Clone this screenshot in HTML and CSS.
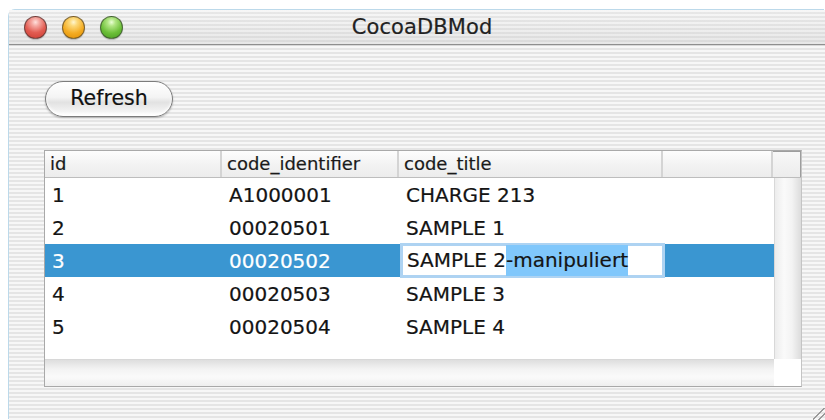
FILE: index.html
```html
<!DOCTYPE html>
<html>
<head>
<meta charset="utf-8">
<title>CocoaDBMod</title>
<link rel="stylesheet" href="styles.css">
</head>
<body>
<div class="window">
  <div class="titlebar">
    <div class="lights">
      <span class="light red"></span>
      <span class="light yellow"></span>
      <span class="light green"></span>
    </div>
    <div class="title">CocoaDBMod</div>
    <div></div>
  </div>
  <div class="content">
    <button class="btn">Refresh</button>
    <div class="table">
      <div class="thead">
        <div class="th">id</div>
        <div class="th">code_identifier</div>
        <div class="th">code_title</div>
        <div class="th"></div>
        <div class="th corner"></div>
      </div>
      <div class="tbody">
        <div class="rows">
          <div class="row"><div class="td">1</div><div class="td">A1000001</div><div class="td">CHARGE 213</div></div>
          <div class="row"><div class="td">2</div><div class="td">00020501</div><div class="td">SAMPLE 1</div></div>
          <div class="row selected"><div class="td">3</div><div class="td">00020502</div><div class="td"><span class="editor">SAMPLE 2<span class="sel">-manipuliert</span></span></div></div>
          <div class="row"><div class="td">4</div><div class="td">00020503</div><div class="td">SAMPLE 3</div></div>
          <div class="row"><div class="td">5</div><div class="td">00020504</div><div class="td">SAMPLE 4</div></div>
        </div>
        <div class="vscroll"></div>
      </div>
      <div class="tfoot">
        <div class="hscroll"></div>
        <div class="box"></div>
      </div>
    </div>
  </div>
  <div class="grip"></div>
</div>
</body>
</html>
```

FILE: styles.css
```css
html, body {
  margin: 0;
  padding: 0;
  background: #fff;
}

body {
  width: 825px;
  height: 420px;
  overflow: hidden;
  font-family: "DejaVu Sans", "Liberation Sans", sans-serif;
  color: #141414;
  -webkit-text-stroke: 0.2px currentColor;
}

/* Aqua pinstripe window */
.window {
  margin: 10px 0 0 9px;
  height: 410px;
  display: flex;
  flex-direction: column;
  position: relative;
  border-top-left-radius: 7px;
  background: repeating-linear-gradient(to bottom, #f7f7f7 0, #f7f7f7 2px, #e5e5e5 2px, #e5e5e5 4px);
  box-shadow: -1px -1px 0 #bcd9ea;
}

.titlebar {
  height: 34px;
  flex: none;
  display: grid;
  grid-template-columns: 1fr auto 1fr;
  align-items: center;
  border-bottom: 1px solid #8f8f8f;
  background:
    linear-gradient(to bottom, rgba(255,255,255,0.2), rgba(205,205,205,0.35)),
    repeating-linear-gradient(to bottom, #f5f5f5 0, #f5f5f5 2px, #e2e2e2 2px, #e2e2e2 4px);
  box-shadow: 0 1px 0 #d8d8d8;
}

.lights {
  display: flex;
  gap: 15px;
  padding-left: 15px;
  padding-top: 1px;
}

.light {
  width: 23px;
  height: 23px;
  border-radius: 50%;
  box-sizing: border-box;
  border: 1px solid rgba(50,50,50,0.6);
  box-shadow: 0 1px 1px rgba(0,0,0,0.2);
}

.red {
  background: radial-gradient(circle at 50% 25%, #ffe0dc 0, #f5a9a2 20%, #e25c52 55%, #c93a30 100%);
}

.yellow {
  background: radial-gradient(circle at 50% 25%, #fff6d0 0, #fcd97a 20%, #f4ac22 58%, #e08d00 100%);
}

.green {
  background: radial-gradient(circle at 50% 25%, #eaffd6 0, #b2e684 20%, #6cbf38 58%, #479a20 100%);
}

.title {
  font-size: 21px;
  color: #222;
  padding-left: 10px;
  letter-spacing: 0.1px;
}

.content {
  padding: 36px 0 0 35px;
  display: flex;
  flex-direction: column;
  align-items: flex-start;
}

/* Aqua push button */
.btn {
  margin-left: 1px;
  width: 128px;
  height: 36px;
  border-radius: 18px;
  border: 1px solid #7c7c7c;
  font-family: inherit;
  font-size: 20.5px;
  color: #111;
  -webkit-text-stroke: 0.2px #111;
  padding: 0 0 2px;
  background: linear-gradient(to bottom, #ffffff 0, #f4f4f4 45%, #e2e2e2 60%, #f2f2f2 85%, #ffffff 100%);
  box-shadow: 0 1px 2px rgba(0,0,0,0.25), inset 0 -2px 3px rgba(255,255,255,0.9);
}

/* Table view */
.table {
  margin-top: 33px;
  width: 758px;
  height: 237px;
  box-sizing: border-box;
  border: 1px solid #a9a9a9;
  border-right-color: #c4c4c4;
  display: flex;
  flex-direction: column;
  background: #fff;
}

.thead {
  height: 26px;
  flex: none;
  display: grid;
  grid-template-columns: 177px 177px 264px 110px 1fr;
  border-bottom: 1px solid #bdbdbd;
  background: linear-gradient(to bottom, #fdfdfd 0, #f3f3f3 50%, #ececec 100%);
}

.th {
  border-right: 2px solid #d4d4d4;
  font-size: 18px;
  line-height: 26px;
  padding-left: 5px;
  white-space: nowrap;
  color: #1a1a1a;
}

.th.corner {
  border-right: none;
  background: linear-gradient(to bottom, #f8f8f8, #ececec);
  box-shadow: inset -1px 1px 0 #9d9d9d;
}

.tbody {
  flex: 1;
  display: flex;
  min-height: 0;
}

.rows {
  flex: 1;
}

.row {
  height: 33px;
  display: grid;
  grid-template-columns: 177px 177px 264px 1fr;
  align-items: center;
  font-size: 20px;
}

.td {
  padding-left: 7px;
  white-space: nowrap;
}

.row.selected {
  background: #3a96d1;
  color: #fff;
}

.editor {
  display: block;
  box-sizing: border-box;
  width: 265px;
  height: 35px;
  margin: -1px 0 -1px -6px;
  padding-left: 4px;
  line-height: 29px;
  border: 3px solid #aed3f2;
  background: #fff;
  color: #141414;
}

.sel {
  background: #80c7fb;
  display: inline-block;
  line-height: 31px;
  margin: -1px 0;
}

.vscroll {
  width: 27px;
  flex: none;
  border-left: 1px solid #d8d8d8;
  box-sizing: border-box;
  background: linear-gradient(to right, #ececec 0, #fafafa 35%, #f3f3f3 65%, #dcdcdc 100%);
}

.tfoot {
  height: 27px;
  flex: none;
  display: flex;
}

.hscroll {
  flex: 1;
  border-top: 1px solid #d8d8d8;
  background: linear-gradient(to bottom, #dedede 0, #f3f3f3 35%, #fafafa 65%, #efefef 100%);
}

.box {
  width: 27px;
  background: #fff;
}

/* resize grip in the corner */
.grip {
  position: absolute;
  right: 0;
  bottom: 0;
  width: 12px;
  height: 12px;
  background: linear-gradient(135deg, transparent 0, transparent 45%, #9a9a9a 45%, #9a9a9a 52%, transparent 52%, transparent 70%, #9a9a9a 70%, #9a9a9a 77%, transparent 77%);
}
```
